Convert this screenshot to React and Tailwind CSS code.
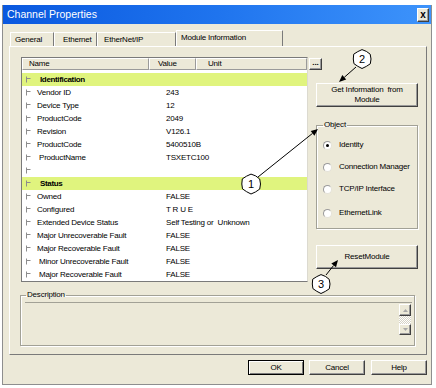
import React from 'react';

const rows = [
  { name: 'Identification', group: true },
  { name: 'Vendor ID', value: '243' },
  { name: 'Device Type', value: '12' },
  { name: 'ProductCode', value: '2049' },
  { name: 'Revision', value: 'V126.1' },
  { name: 'ProductCode', value: '5400510B' },
  { name: 'ProductName', value: 'TSXETC100', indent: true },
  { name: '', value: '' },
  { name: 'Status', group: true },
  { name: 'Owned', value: 'FALSE' },
  { name: 'Configured', value: 'T R U E' },
  { name: 'Extended Device Status', value: 'Self Testing or  Unknown' },
  { name: 'Major Unrecoverable Fault', value: 'FALSE' },
  { name: 'Major Recoverable Fault', value: 'FALSE' },
  { name: 'Minor Unrecoverable Fault', value: 'FALSE', indent: true },
  { name: 'Major Recoverable Fault', value: 'FALSE', indent: true },
];

const TreeIcon = () => (
  <svg width="6" height="7" viewBox="0 0 6 7" className="shrink-0">
    <path d="M0.5 0.5v6M0.5 2.5h4" stroke="#8c8c8c" strokeWidth="1" fill="none" />
  </svg>
);

const Radio = ({ checked }) => (
  <span className="w-[9px] h-[9px] rounded-full bg-white border border-[#9a9a9a] border-r-[#e4e2d8] border-b-[#e4e2d8] flex items-center justify-center shrink-0">
    {checked && <span className="w-[3px] h-[3px] rounded-full bg-black" />}
  </span>
);

const raised =
  'bg-[#ECE9D8] border border-t-white border-l-white border-r-[#404040] border-b-[#404040] shadow-[inset_-1px_-1px_0_#9a9a9a]';

// hand drawn looking callout circle
const Callout = ({ cx, cy, r, label }) => {
  const jitter = [0, 0.6, -0.4, 0.5, -0.6, 0.3, -0.3, 0.6, -0.5, 0.4, -0.2, 0.5];
  const pts = jitter
    .map((j, i) => {
      const a = (i / jitter.length) * Math.PI * 2;
      return `${(cx + (r + j) * Math.cos(a)).toFixed(1)},${(cy + (r + j) * Math.sin(a)).toFixed(1)}`;
    })
    .join(' ');
  return (
    <g>
      <polygon points={pts} fill="white" stroke="black" strokeWidth="1" />
      <text x={cx} y={cy + 4} textAnchor="middle" fontSize="11" fontFamily="Liberation Sans, sans-serif">
        {label}
      </text>
    </g>
  );
};

const Arrow = ({ x1, y1, x2, y2 }) => {
  const a = Math.atan2(y2 - y1, x2 - x1);
  const len = 7;
  const w = 3;
  const bx = x2 - len * Math.cos(a);
  const by = y2 - len * Math.sin(a);
  const p1 = `${x2},${y2}`;
  const p2 = `${(bx + w * Math.sin(a)).toFixed(1)},${(by - w * Math.cos(a)).toFixed(1)}`;
  const p3 = `${(bx - w * Math.sin(a)).toFixed(1)},${(by + w * Math.cos(a)).toFixed(1)}`;
  return (
    <g>
      <line x1={x1} y1={y1} x2={bx} y2={by} stroke="black" strokeWidth="1" />
      <polygon points={`${p1} ${p2} ${p3}`} fill="black" />
    </g>
  );
};

export default function App() {
  return (
    <div className="relative w-[436px] h-[388px] bg-white overflow-hidden font-['Liberation_Sans',Arial,sans-serif] text-black text-[8px] tracking-[-0.2px] leading-[10px]">
      <div className="ml-[2px] mt-[5px] w-[430px] h-[380px] bg-[#ECE9D8] border-l border-r border-b border-[#8e8e8e] flex flex-col">
        {/* Title bar */}
        <div className="h-[19px] flex items-center bg-gradient-to-r from-[#0a58df] via-[#1f74ee] to-[#3d93fb] pl-[4px] pr-[2px]">
          <span className="text-white text-[10.5px] tracking-normal leading-none">Channel Properties</span>
          <div className={`ml-auto w-[12px] h-[14px] flex items-center justify-center ${raised}`}>
            <span className="text-[10px] font-bold leading-none">x</span>
          </div>
        </div>

        {/* Tabs */}
        <div className="mt-[6px] ml-[7px] flex items-end h-[16px]">
          <div className="w-[44px] h-[14px] pl-[4px] flex items-center border-t border-l border-white border-r border-r-[#7a7a7a]">General</div>
          <div className="w-[43px] h-[14px] pl-[8px] flex items-center border-t border-l border-white border-r border-r-[#7a7a7a]">Ethernet</div>
          <div className="w-[79px] h-[14px] pl-[6px] flex items-center border-t border-l border-white border-r border-r-[#7a7a7a]">EtherNet/IP</div>
          <div className="w-[107px] h-[16px] pl-[4px] pb-[2px] flex items-center border-t border-l border-white border-r border-r-[#7a7a7a]">Module Information</div>
        </div>

        {/* Panel */}
        <div className="ml-[6px] w-[418px] h-[309px] border border-l-white border-t-white border-r-[#7a7a7a] border-b-[#7a7a7a] flex flex-col">
          <div className="mt-[10px] ml-[11px] flex">
            {/* Property table */}
            <div className="relative w-[287px] h-[225px] bg-white border border-l-[#7a7a7a] border-t-[#7a7a7a] border-r-[#dcdad0] border-b-[#7a7a7a]">
              <div className="flex h-[12px]">
                <div className="w-[127px] pl-[6px] flex items-center border border-t-white border-l-white border-r-[#9a9a9a] border-b-[#9a9a9a] bg-[#ECE9D8]">Name</div>
                <div className="w-[47px] pl-[8px] flex items-center border border-t-white border-l-white border-r-[#9a9a9a] border-b-[#9a9a9a] bg-[#ECE9D8]">Value</div>
                <div className="w-[111px] pl-[11px] flex items-center border border-t-white border-l-white border-r-[#9a9a9a] border-b-[#9a9a9a] bg-[#ECE9D8]">Unit</div>
              </div>
              <div className={`absolute left-[287px] top-0 w-[13px] h-[12px] flex items-end justify-center pb-[2px] ${raised}`}>
                <span className="font-bold leading-none tracking-normal">...</span>
              </div>
              <div className="pt-[3px]">
                {rows.map((r, i) => (
                  <div key={i} className={`flex items-center h-[13px] ${r.group ? 'bg-[#e0f47e]' : ''}`}>
                    <div className="w-[144px] pl-[4px] flex items-center">
                      <TreeIcon />
                      {r.group ? (
                        <span className="ml-[8px] font-bold tracking-[-0.35px]">{r.name}</span>
                      ) : (
                        <span className={r.indent ? 'ml-[7px]' : 'ml-[5px]'}>{r.name}</span>
                      )}
                    </div>
                    <span className="whitespace-pre">{r.value}</span>
                  </div>
                ))}
              </div>
            </div>

            {/* Right column */}
            <div className="ml-[8px] w-[102px] flex flex-col">
              <div className={`mt-[26px] h-[24px] flex flex-col items-center justify-center ${raised}`}>
                <span className="whitespace-pre">Get Information  from</span>
                <span>Module</span>
              </div>
              <fieldset className="mt-[13px] h-[109px] px-[6px] border border-[#a2a196] shadow-[inset_1px_1px_0_white,1px_1px_0_white]">
                <legend className="px-[1px] leading-[10px]">Object</legend>
                <div className="mt-[10px] h-[10px] flex items-center">
                  <Radio checked />
                  <span className="ml-[7px]">Identity</span>
                </div>
                <div className="mt-[12px] h-[10px] flex items-center">
                  <Radio />
                  <span className="ml-[7px]">Connection Manager</span>
                </div>
                <div className="mt-[12px] h-[10px] flex items-center">
                  <Radio />
                  <span className="ml-[7px]">TCP/IP Interface</span>
                </div>
                <div className="mt-[14px] h-[10px] flex items-center">
                  <Radio />
                  <span className="ml-[7px]">EthernetLink</span>
                </div>
              </fieldset>
              <div className={`mt-[16px] h-[24px] flex items-center justify-center ${raised}`}>ResetModule</div>
            </div>
          </div>

          {/* Description */}
          <fieldset className="mt-[8px] ml-[10px] w-[395px] h-[56px] px-[5px] border border-[#a2a196] shadow-[inset_1px_1px_0_white,1px_1px_0_white]">
            <legend className="px-[1px] leading-[10px]">Description</legend>
            <div className="mt-[2px] -ml-[1px] -mr-[3px] h-[41px] border-t border-[#a2a196] flex justify-end pr-[1px] pt-[1px]">
              <div className="w-[12px] flex flex-col">
                <div className={`h-[12px] flex items-center justify-center ${raised}`}>
                  <svg width="5" height="3" viewBox="0 0 5 3"><path d="M2.5 0L5 3H0z" fill="#a8a8a8" /></svg>
                </div>
                <div className="h-[8px] bg-[repeating-conic-gradient(#ffffff_0%_25%,#d6d3c6_0%_50%)] bg-[length:2px_2px]" />
                <div className={`h-[11px] flex items-center justify-center ${raised}`}>
                  <svg width="5" height="3" viewBox="0 0 5 3"><path d="M0 0H5L2.5 3z" fill="#a8a8a8" /></svg>
                </div>
              </div>
            </div>
          </fieldset>
        </div>

        {/* Dialog buttons */}
        <div className="mt-[5px] flex justify-end pr-[4px]">
          <div className="w-[56px] h-[15px] mr-[5px] flex items-center justify-center bg-[#ECE9D8] border border-black shadow-[inset_1px_1px_0_white,inset_-1px_-1px_0_#7a7a7a]">OK</div>
          <div className={`w-[56px] h-[15px] mr-[6px] flex items-center justify-center ${raised}`}>Cancel</div>
          <div className={`w-[56px] h-[15px] flex items-center justify-center ${raised}`}>Help</div>
        </div>
      </div>

      {/* Callouts */}
      <svg className="absolute inset-0 pointer-events-none" width="436" height="388" viewBox="0 0 436 388">
        <Arrow x1={258} y1={177} x2={318} y2={129} />
        <Arrow x1={356} y1={67} x2={339} y2={82} />
        <Arrow x1={326} y1={275} x2={338} y2={260} />
        <Callout cx={251} cy={184} r={9.5} label="1" />
        <Callout cx={362} cy={59} r={9} label="2" />
        <Callout cx={321} cy={284} r={9} label="3" />
      </svg>
    </div>
  );
}
